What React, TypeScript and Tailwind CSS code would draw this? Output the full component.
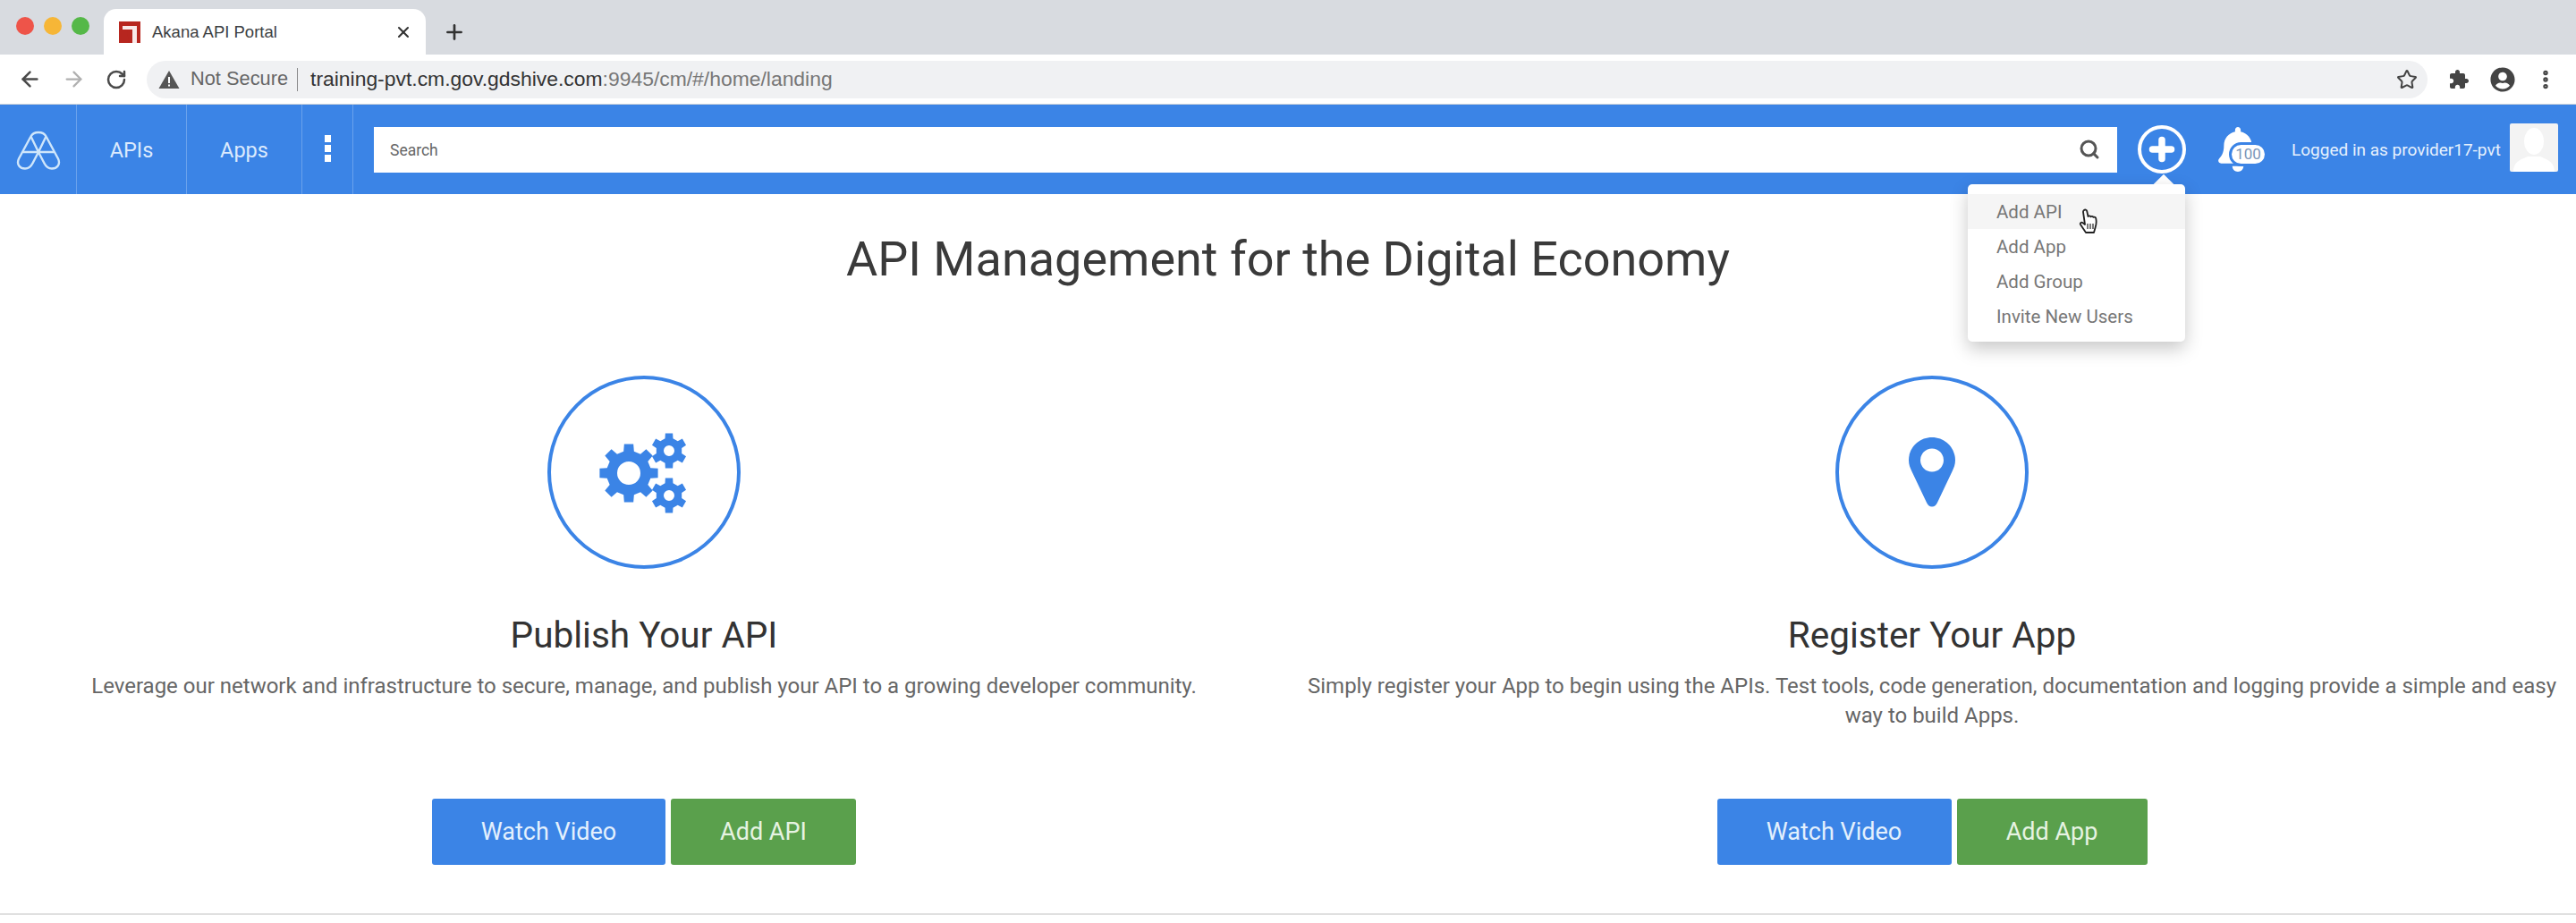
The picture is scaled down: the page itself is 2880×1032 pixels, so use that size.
import { ArrowLeft, ArrowRight, RotateCw, Star, Search, X, Plus, EllipsisVertical } from "lucide-react";
import { FaUserCircle, FaBell } from "react-icons/fa";

const menuItems = ["Add API", "Add App", "Add Group", "Invite New Users"];

function gearPath(cx: number, cy: number, outer: number, inner: number, hole: number, teeth: number) {
  const pts: string[] = [];
  const step = (Math.PI * 2) / teeth;
  for (let i = 0; i < teeth; i++) {
    const a = i * step - Math.PI / 2;
    const w = step * 0.2;
    const list: [number, number][] = [
      [a - w * 1.5, inner],
      [a - w, outer],
      [a + w, outer],
      [a + w * 1.5, inner],
    ];
    for (const [an, r] of list) {
      pts.push(`${(cx + Math.cos(an) * r).toFixed(2)} ${(cy + Math.sin(an) * r).toFixed(2)}`);
    }
  }
  const ring = `M${cx - hole} ${cy}a${hole} ${hole} 0 1 0 ${hole * 2} 0a${hole} ${hole} 0 1 0 ${-hole * 2} 0Z`;
  return `M${pts.join("L")}Z${ring}`;
}

function GearsIcon() {
  return (
    <svg width="100" height="92" viewBox="0 0 100 92" fill="#3b84e6" fillRule="evenodd">
      <path d={gearPath(33, 47, 33, 25, 13, 8)} />
      <path d={gearPath(78, 22, 20, 14.5, 6, 6)} />
      <path d={gearPath(78, 72, 20, 14.5, 6, 6)} />
    </svg>
  );
}

function PinIcon() {
  return (
    <svg width="52" height="78" viewBox="0 0 52 78" fill="#3b84e6" fillRule="evenodd">
      <path d="M26 0C11.6 0 0 11.4 0 25.5c0 5 1.6 8.6 3.4 12.4L19.8 72.6C21 75.6 23.2 77.6 26 77.6s5-2 6.2-5L48.6 37.9C50.4 34.1 52 30.500 52 25.500 52 11.400 40.400 0 26 0ZM13 25.500a13 13 0 1 0 26 0a13 13 0 1 0 -26 0Z" />
    </svg>
  );
}

function AkanaLogo() {
  return (
    <svg width="50" height="46" viewBox="0 0 50 46" fill="none" stroke="#cfe6fb" strokeWidth="2.4">
      <path d="M16.500 8.500C19.500 2.500 30.500 2.500 33.500 8.500L47 33.500C50 40 45.500 44.500 40 44.500C36 44.500 33.500 42.500 31.500 38.500L25 26L18.500 38.500C16.500 42.500 14 44.500 10 44.500C4.500 44.500 0 40 3 33.500Z" />
      <path d="M16.500 8.500L25 26L33.500 8.500M8 26H42" />
    </svg>
  );
}

function Favicon() {
  return (
    <svg width="24" height="24" viewBox="0 0 24 24" className="shrink-0">
      <rect width="24" height="24" fill="#b7261f" />
      <path d="M4 5H20V24H15V9H4Z" fill="#ffffff" opacity="0.9" />
      <path d="M9 10H14V24H11Z" fill="#b7261f" />
    </svg>
  );
}

function WarningIcon() {
  return (
    <svg width="24" height="22" viewBox="0 0 24 22" className="shrink-0">
      <path d="M12 1L23.500 21H.5Z" fill="#555555" />
      <path d="M12 8v7M12 16.500v2" stroke="#ffffff" strokeWidth="2" />
    </svg>
  );
}

function PuzzleIcon() {
  return (
    <svg width="24" height="24" viewBox="0 0 24 24" fill="#444444" className="ml-[23px] shrink-0">
      <path d="M20.500 11H19V7c0-1.100-.9-2-2-2h-4V3.500C13 2.120 11.880 1 10.500 1S8 2.120 8 3.500V5H4c-1.100 0-1.990.9-1.990 2v3.800H3.500c1.490 0 2.700 1.210 2.700 2.700s-1.210 2.700-2.700 2.700H2V20c0 1.100.9 2 2 2h3.800v-1.500c0-1.490 1.210-2.700 2.700-2.700 1.490 0 2.700 1.210 2.700 2.700V22H17c1.100 0 2-.9 2-2v-4h1.500c1.380 0 2.500-1.120 2.500-2.500S21.880 11 20.500 11z" />
    </svg>
  );
}

function HandCursor() {
  return (
    <svg width="22" height="30" viewBox="0 0 22 30" className="absolute left-[2324px] top-[233px]">
      <path
        d="M6 2c1.200-1 2.800-.5 3.200 1l1.300 6c.8-1 2.400-.8 3 .4.800-.8 2.300-.6 2.900.5 1-.5 2.600 0 2.900 1.500.6 3 .4 6.500-.6 9.500L17 27H8l-6-9c-.8-1.400.9-3 2.300-2L7 18 5 4c-.1-.8.400-1.500 1-2Z"
        fill="#ffffff"
        stroke="#222222"
        strokeWidth="1.800"
        strokeLinejoin="round"
      />
      <path d="M10 17v6M13 17v6M16 17v6" stroke="#333333" strokeWidth="1.300" />
    </svg>
  );
}

function Feature({
  title,
  text,
  icon,
  action,
  watchWidth,
  actionWidth,
}: {
  title: string;
  text: string;
  icon: React.ReactNode;
  action: string;
  watchWidth: string;
  actionWidth: string;
}) {
  return (
    <div className="flex w-1/2 flex-col items-center px-[22px]">
      <div className="flex h-[216px] w-[216px] items-center justify-center rounded-full border-4 border-[#3b84e6]">
        {icon}
      </div>
      <h2 className="mt-[49px] text-[40.500px] leading-[50px] font-normal text-[#333]">{title}</h2>
      <p className="mt-[16px] h-[142px] text-center text-[24px] leading-[33px] text-[#666]">{text}</p>
      <div className="flex gap-[6px]">
        <button className={`h-[74px] rounded-[3px] bg-[#3b84e6] text-[27px] text-[#e3f0fd] ${watchWidth}`}>
          Watch Video
        </button>
        <button className={`h-[74px] rounded-[3px] bg-[#5aa04c] text-[27px] text-[#e6f3e2] ${actionWidth}`}>
          {action}
        </button>
      </div>
    </div>
  );
}

export default function App() {
  return (
    <div className="relative h-[1032px] w-[2880px] overflow-hidden bg-white font-['Roboto',sans-serif]">
      {/* browser tabs */}
      <div className="flex h-[61px] items-end bg-[#d8dbe0] pl-[18px]">
        <div className="mr-[18px] mb-[22px] flex gap-[11px]">
          <span className="h-[20px] w-[20px] rounded-full bg-[#ee5449]" />
          <span className="h-[20px] w-[20px] rounded-full bg-[#f6b637]" />
          <span className="h-[20px] w-[20px] rounded-full bg-[#55b848]" />
        </div>
        <div className="ml-[-2px] flex h-[51px] w-[360px] items-center rounded-t-[14px] bg-white pl-[17px] pr-[15px]">
          <Favicon />
          <span className="ml-[13px] flex-1 font-['Liberation_Sans',sans-serif] text-[18.500px] text-[#3c4043]">
            Akana API Portal
          </span>
          <X size={20} strokeWidth={2.500} className="text-[#333]" />
        </div>
        <Plus size={26} strokeWidth={2.500} className="mb-[12px] ml-[19px] text-[#333]" />
      </div>

      {/* browser toolbar */}
      <div className="flex h-[56px] items-center border-b border-[#d0d5da] bg-white pl-[20px] pr-[20px]">
        <ArrowLeft size={27} strokeWidth={2.200} className="text-[#4a4a4a]" />
        <ArrowRight size={27} strokeWidth={2} className="ml-[22px] text-[#b0b0b0]" />
        <RotateCw size={24} strokeWidth={2.500} className="ml-[22px] text-[#4a4a4a]" />
        <div className="ml-[22px] flex h-[42px] w-[2550px] items-center rounded-full bg-[#f0f1f3] pl-[13px] pr-[11px]">
          <WarningIcon />
          <span className="ml-[12px] font-['Liberation_Sans',sans-serif] text-[21.800px] text-[#666]">Not Secure</span>
          <span className="ml-[10px] h-[26px] w-px bg-[#888]" />
          <span className="ml-[14px] flex-1 font-['Liberation_Sans',sans-serif] text-[22.900px] text-[#777]">
            <span className="text-[#333]">training-pvt.cm.gov.gdshive.com</span>:9945/cm/#/home/landing
          </span>
          <Star size={24} strokeWidth={2} className="text-[#444]" />
        </div>
        <PuzzleIcon />
        <FaUserCircle size={28} className="ml-[23px] text-[#444]" />
        <EllipsisVertical size={26} strokeWidth={3} className="ml-[21px] text-[#444]" />
      </div>

      {/* app nav */}
      <nav className="flex h-[100px] items-center bg-[#3b84e6] pr-[20px] text-[#dbeafd]">
        <div className="flex h-full w-[86px] items-center justify-center border-r border-[#6aa2ec]">
          <AkanaLogo />
        </div>
        <div className="flex h-full w-[123px] items-center justify-center border-r border-[#6aa2ec] pt-[3px] text-[23.500px]">
          APIs
        </div>
        <div className="flex h-full w-[129px] items-center justify-center border-r border-[#6aa2ec] pt-[3px] text-[23.500px]">
          Apps
        </div>
        <div className="flex h-full w-[57px] flex-col items-center justify-center gap-[3px] border-r border-[#6aa2ec] pb-[2px]">
          <span className="h-[8px] w-[7px] bg-white" />
          <span className="h-[8px] w-[7px] bg-white" />
          <span className="h-[8px] w-[7px] bg-white" />
        </div>
        <div className="ml-[23px] flex h-[51px] w-[1949px] items-center justify-between bg-white pl-[18px] pr-[19px]">
          <span className="pt-[2px] text-[17.500px] text-[#666]">Search</span>
          <Search size={24} strokeWidth={3} className="text-[#555]" />
        </div>
        <div className="ml-[23px] flex h-[54px] w-[54px] items-center justify-center rounded-full border-[4px] border-white">
          <Plus size={36} strokeWidth={5} className="text-white" />
        </div>
        <div className="relative ml-[33px] flex h-[54px] w-[58px] items-center">
          <FaBell size={50} className="text-white" />
          <span className="absolute left-[15px] top-[19px] flex h-[27px] w-[43px] items-center justify-center rounded-full border-[3px] border-[#3b84e6] bg-white text-[17px] text-[#7a95b8]">
            100
          </span>
        </div>
        <span className="ml-[27px] pt-[2px] text-[19px] whitespace-nowrap text-[#e6f1fd]">Logged in as provider17-pvt</span>
        <div className="mb-[4px] ml-[10px] flex h-[54px] w-[54px] justify-center overflow-hidden rounded-[2px] bg-[#f3f3f3]">
          <svg width="54" height="54" viewBox="0 0 54 54" fill="#ffffff">
            <ellipse cx="27" cy="20" rx="11" ry="15" />
            <path d="M4 54c0-12 10-14 16-17h14c6 3 16 5 16 17Z" />
          </svg>
        </div>
      </nav>

      {/* landing content */}
      <main className="border-b-2 border-[#e0e0e0]">
        <h1 className="pt-[47px] text-center text-[54px] leading-[52px] font-normal text-[#3a3a3a]">
          API Management for the Digital Economy
        </h1>
        <div className="mt-[104px] flex pb-[54px]">
          <Feature
            title="Publish Your API"
            text="Leverage our network and infrastructure to secure, manage, and publish your API to a growing developer community."
            icon={<GearsIcon />}
            action="Add API"
            watchWidth="w-[261px]"
            actionWidth="w-[207px]"
          />
          <Feature
            title="Register Your App"
            text="Simply register your App to begin using the APIs. Test tools, code generation, documentation and logging provide a simple and easy way to build Apps."
            icon={<PinIcon />}
            action="Add App"
            watchWidth="w-[262px]"
            actionWidth="w-[213px]"
          />
        </div>
      </main>

      {/* add menu */}
      <div className="absolute left-[2419px] top-[196px] h-[16px] w-[16px] -translate-x-1/2 translate-y-[2px] rotate-45 bg-white" />
      <div className="absolute left-[2200px] top-[206px] w-[243px] rounded-[5px] bg-white pt-[11px] pb-[9px] text-[20.500px] text-[#777] shadow-[0_8px_20px_rgba(0,0,0,0.22)]">
        {menuItems.map((item, i) => (
          <div key={item} className={`flex h-[39px] items-center pl-[32px] pt-[2px] ${i === 0 ? "bg-[#f5f5f5]" : ""}`}>
            {item}
          </div>
        ))}
      </div>
      <HandCursor />
    </div>
  );
}
